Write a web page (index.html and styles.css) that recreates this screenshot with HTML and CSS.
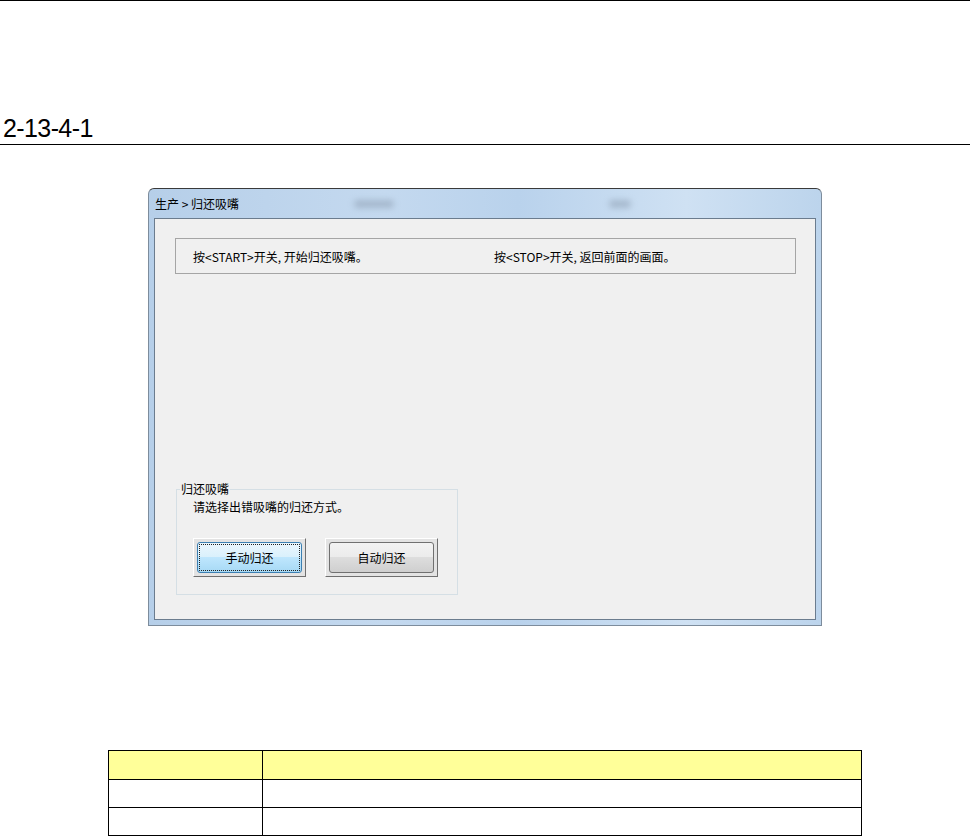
FILE: index.html
```html
<!DOCTYPE html>
<html lang="zh-CN">
<head>
    <meta charset="UTF-8">
    <title>2-13-4-1 归还吸嘴</title>
    <link rel="stylesheet" href="styles.css">
</head>
<body>
    <div class="top-rule"></div>
    <div class="heading">2-13-4-1</div>

    <div class="window">
        <div class="titlebar">
            <span class="title">生产 &gt; 归还吸嘴</span>
            <span class="blur blur-1"></span>
            <span class="blur blur-2"></span>
        </div>
        <div class="client">
            <div class="info">
                <span class="info-left">按&lt;START&gt;开关, 开始归还吸嘴。</span>
                <span>按&lt;STOP&gt;开关, 返回前面的画面。</span>
            </div>

            <fieldset class="group">
                <legend>归还吸嘴</legend>
                <div class="group-text">请选择出错吸嘴的归还方式。</div>
                <div class="group-buttons">
                    <button class="btn btn-focus"><span class="btn-face">手动归还</span></button>
                    <button class="btn"><span class="btn-face">自动归还</span></button>
                </div>
            </fieldset>
        </div>
    </div>

    <table class="table">
        <colgroup>
            <col class="col-key">
            <col>
        </colgroup>
        <thead>
            <tr><th></th><th></th></tr>
        </thead>
        <tbody>
            <tr><td></td><td></td></tr>
            <tr><td></td><td></td></tr>
        </tbody>
    </table>
</body>
</html>
```

FILE: styles.css
```css
body {
    margin: 0;
    padding: 0;
    background: #ffffff;
    font-family: "Liberation Sans", Arial, sans-serif;
    color: #000000;
}
.top-rule {
    border-top: 1px solid #000000;
}
.heading {
    padding: 115px 0 3px 3px;
    font-size: 25px;
    line-height: 25px;
    letter-spacing: -0.6px;
    border-bottom: 1px solid #000000;
}

/* dialog window */
.window {
    width: 674px;
    box-sizing: border-box;
    margin: 43px 0 0 148px;
    padding: 0 5px 5px 5px;
    border: 1px solid #7d8c9c;
    border-top-color: #3a3a3a;
    border-radius: 6px 6px 0 0;
    background: linear-gradient(90deg, #b6cfe9 0%, #c4d9ef 35%, #b9d2ec 55%, #cfe1f3 80%, #bcd4ec 100%);
    font-family: "Noto Sans CJK SC", "Liberation Sans", sans-serif;
    font-size: 12px;
}
.titlebar {
    position: relative;
    height: 29px;
    line-height: 29px;
    padding-left: 1px;
}
.title {
    color: #000000;
}
.blur {
    position: absolute;
    top: 11px;
    height: 8px;
    border-radius: 4px;
    background: #8b9cb0;
    filter: blur(3px);
    opacity: 0.55;
}
.blur-1 {
    left: 200px;
    width: 40px;
}
.blur-2 {
    left: 455px;
    width: 22px;
}
.client {
    height: 402px;
    box-sizing: border-box;
    border: 1px solid #6b7c8e;
    background: #f0f0f0;
    padding-top: 19px;
}
.info {
    display: flex;
    align-items: center;
    height: 36px;
    box-sizing: border-box;
    margin: 0 19px 0 20px;
    padding-left: 17px;
    border: 1px solid #a5a5a5;
}
.info-left {
    width: 301px;
}

/* group box */
.group {
    width: 282px;
    box-sizing: border-box;
    margin: 207px 0 0 21px;
    padding: 0;
    border: 1px solid #d5dfe5;
    min-inline-size: 0;
}
.group legend {
    margin-left: 3px;
    padding: 0 1px;
    line-height: 16px;
}
.group-text {
    padding: 2px 0 0 16px;
    line-height: 16px;
}
.group-buttons {
    display: flex;
    gap: 19px;
    padding: 23px 0 17px 16px;
}
.btn {
    width: 113px;
    height: 39px;
    box-sizing: border-box;
    padding: 3px;
    margin: 0;
    border: 1px solid;
    border-color: #ffffff #6f6f6f #6f6f6f #ffffff;
    background: #e3e3e3;
    font-family: "Noto Sans CJK SC", "Liberation Sans", sans-serif;
    font-size: 12px;
    color: #000000;
}
.btn-face {
    display: flex;
    align-items: center;
    justify-content: center;
    height: 100%;
    box-sizing: border-box;
    border: 1px solid #707070;
    border-radius: 3px;
    background: linear-gradient(180deg, #f2f2f2 0%, #ebebeb 50%, #dddddd 50%, #cfcfcf 100%);
}
.btn-focus .btn-face {
    border-color: #3c7fb1;
    background: linear-gradient(180deg, #eaf6fd 0%, #d9f0fc 50%, #bee6fd 50%, #a7d9f5 100%);
    outline: 1px dotted #202020;
    outline-offset: -3px;
}

/* table */
.table {
    width: 754px;
    margin: 124px 0 0 108px;
    border-collapse: collapse;
    table-layout: fixed;
}
.col-key {
    width: 154px;
}
.table th, .table td {
    border: 1px solid #000000;
    padding: 0;
    height: 27px;
}
.table th {
    background: #ffff99;
    height: 28px;
}
```
